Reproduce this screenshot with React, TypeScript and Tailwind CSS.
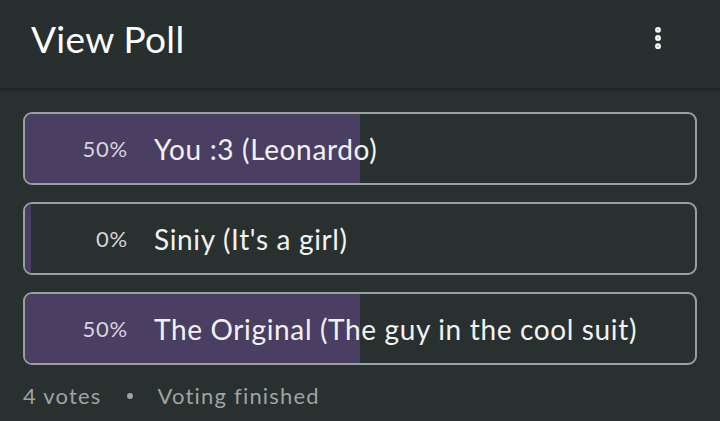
import { EllipsisVertical } from "lucide-react"

const options = [
  { pct: 50, label: "You :3 (Leonardo)" },
  { pct: 0, label: "Siniy (It's a girl)" },
  { pct: 50, label: "The Original (The guy in the cool suit)" },
]

export default function App() {
  return (
    <div className="w-[720px] h-[421px] bg-[#283030] text-white overflow-hidden" style={{ fontFamily: "Lato, 'Open Sans', sans-serif" }}>
      <header className="h-[88px] bg-[#272f2f] flex items-center justify-between pl-[31px] pr-[48px] shadow-[0_2px_4px_rgba(0,0,0,0.35)] relative">
        <h1 className="text-[37px] leading-none -mt-[12px] tracking-[0.3px]">View Poll</h1>
        <EllipsisVertical className="w-7 h-7 -mt-[12px]" strokeWidth={3} />
      </header>
      <div className="px-[23px] pt-[24px] flex flex-col gap-[17px]">
        {options.map((o) => (
          <div key={o.label} className="relative h-[73px] rounded-[9px] border-2 border-[#98a1a0] overflow-hidden flex items-center">
            <div className="absolute left-0 top-0 bottom-0 bg-[#4a3f63]" style={{ width: o.pct === 0 ? "6px" : `${o.pct}%` }} />
            <span className="relative w-[103px] text-right text-[22px] tracking-[0.8px] text-[#d6d4dc]">{o.pct}%</span>
            <span className="relative ml-[26px] text-[28px] tracking-[0.65px] text-[#f2f2f2]">{o.label}</span>
          </div>
        ))}
      </div>
      <div className="px-[23px] mt-[14px] flex items-center text-[22px] text-[#9ea4a3] tracking-[1.2px]">
        <span>4 votes</span>
        <span className="w-[6px] h-[6px] rounded-full bg-[#9ea4a3] mx-[25px]" />
        <span>Voting finished</span>
      </div>
    </div>
  )
}
